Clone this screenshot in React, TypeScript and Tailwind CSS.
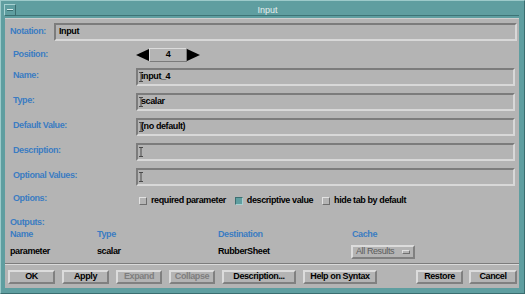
import React from "react";

const font = { fontFamily: '"Liberation Sans", Arial, sans-serif' };

const sunken =
  "border-2 border-t-[#7c7c7c] border-l-[#7c7c7c] border-b-[#d8d8d8] border-r-[#d8d8d8]";
const raised =
  "border-2 border-t-[#dcdcdc] border-l-[#dcdcdc] border-b-[#808080] border-r-[#808080]";

function Cursor() {
  return (
    <svg width="4" height="10" viewBox="0 0 4 10" className="shrink-0">
      <path d="M0 0.5H4M0 9.5H4M2 0.5V9.5" stroke="#4a4a4a" strokeWidth="1" fill="none" />
    </svg>
  );
}

function Field({
  label,
  value,
  cursor,
}: {
  label: string;
  value?: string;
  cursor?: boolean;
}) {
  return (
    <div className="flex items-start h-[18px]">
      <div className="w-[126px] pl-[3px] pt-[2px] leading-[11px] text-[#3b7cc2]">{label}</div>
      <div className={`flex-1 mr-[4px] h-[18px] flex items-center pl-[1px] ${sunken}`}>
        {cursor && <Cursor />}
        {value && <span className="text-black -translate-x-[2px]">{value}</span>}
      </div>
    </div>
  );
}

function Check({ label, checked }: { label: string; checked?: boolean }) {
  return (
    <div className="flex items-center gap-[4px]">
      <div
        className={`w-[8px] h-[8px] border ${
          checked
            ? "bg-[#5f9ea0] border-t-[#3d6f71] border-l-[#3d6f71] border-b-[#a8d0d0] border-r-[#a8d0d0]"
            : "bg-[#b4b4b4] border-t-[#e2e2e2] border-l-[#e2e2e2] border-b-[#6e6e6e] border-r-[#6e6e6e]"
        }`}
      />
      <span className="text-black">{label}</span>
    </div>
  );
}

function Btn({ label, w, disabled }: { label: string; w: string; disabled?: boolean }) {
  return (
    <div
      className={`${w} h-[14px] flex items-center justify-center ${raised} ${
        disabled ? "text-[#7e7e7e]" : "text-black"
      }`}
    >
      {label}
    </div>
  );
}

export default function App() {
  return (
    <div
      style={font}
      className="w-[525px] h-[294px] bg-[#5f9ea0] flex flex-col pt-[3px] pl-[4px] pr-[5px] pb-[5px] border border-t-[#9ccaca] border-l-[#9ccaca] border-b-[#3a6e70] border-r-[#3a6e70] text-[9px] font-bold tracking-[-0.4px] select-none"
    >
      <div className="h-[12px] flex items-center -ml-[1px] border-b border-[#3d7476]">
        <div className="w-[12px] h-[12px] flex items-center justify-center border border-t-[#a6d2d2] border-l-[#a6d2d2] border-b-[#3a6e70] border-r-[#3a6e70]">
          <div className="w-[6px] h-[2px] bg-[#d8ecec] border-b border-[#3a6e70]" />
        </div>
        <div className="flex-1 text-center font-normal text-[#e4eeee] tracking-normal leading-[12px]">
          Input
        </div>
      </div>
      <div className="flex-1 mt-[2px] bg-[#b4b4b4] flex flex-col border-t border-[#cfcfcf]">
        <div className="flex items-center h-[18px] mt-[4px] pl-[5px]">
          <div className="w-[44px] text-[#3b7cc2]">Notation:</div>
          <div className={`flex-1 mr-[2px] h-[18px] flex items-center pl-[3px] ${sunken}`}>
            <span className="text-black">Input</span>
          </div>
        </div>

        <div className="flex items-center h-[14px] mt-[7px] pl-[8px]">
          <div className="w-[123px] text-[#3b7cc2]">Position:</div>
          <svg width="13" height="12" viewBox="0 0 13 12">
            <path d="M0 6L13 0V12Z" fill="#000" />
          </svg>
          <div className="w-[38px] h-[14px] flex items-center justify-center text-black border border-t-[#dcdcdc] border-l-[#dcdcdc] border-b-[#7a7a7a] border-r-[#7a7a7a]">
            4
          </div>
          <svg width="13" height="12" viewBox="0 0 13 12">
            <path d="M13 6L0 0V12Z" fill="#000" />
          </svg>
        </div>

        <div className="flex flex-col gap-[7px] mt-[6px] pl-[5px]">
          <Field label="Name:" value="input_4" cursor />
          <Field label="Type:" value="scalar" cursor />
          <Field label="Default Value:" value="(no default)" cursor />
          <Field label="Description:" cursor />
          <Field label="Optional Values:" cursor />
        </div>

        <div className="flex items-center h-[11px] mt-[9px] pl-[8px]">
          <div className="w-[126px] text-[#3b7cc2] -mt-[3px]">Options:</div>
          <div className="flex items-center gap-[9px]">
            <Check label="required parameter" />
            <Check label="descriptive value" checked />
            <Check label="hide tab by default" />
          </div>
        </div>

        <div className="pl-[5px] mt-[11px] leading-[11px] text-[#3b7cc2]">Outputs:</div>
        <div className="pl-[5px] mt-[1px] leading-[11px] flex text-[#3b7cc2]">
          <div className="w-[87px]">Name</div>
          <div className="w-[121px]">Type</div>
          <div className="w-[134px]">Destination</div>
          <div>Cache</div>
        </div>
        <div className="pl-[5px] mt-[5px] h-[14px] flex items-center text-black">
          <div className="w-[87px]">parameter</div>
          <div className="w-[121px]">scalar</div>
          <div className="w-[133px]">RubberSheet</div>
          <div className={`w-[64px] h-[14px] flex items-center justify-between px-[3px] text-[#5c5c5c] font-normal ${raised}`}>
            <span>All Results</span>
            <div className="w-[8px] h-[4px] border border-t-[#e0e0e0] border-l-[#e0e0e0] border-b-[#707070] border-r-[#707070]" />
          </div>
        </div>

        <div className="mt-[4px] h-[2px] border-t border-b border-t-[#7c7c7c] border-b-[#dadada]" />

        <div className="flex items-center mt-[5px] pl-[3px] pr-[2px]">
          <div className="flex gap-[7px]">
            <Btn label="OK" w="w-[47px]" />
            <Btn label="Apply" w="w-[47px]" />
            <Btn label="Expand" w="w-[46px]" disabled />
            <Btn label="Collapse" w="w-[46px]" disabled />
            <Btn label="Description..." w="w-[74px]" />
            <Btn label="Help on Syntax" w="w-[74px]" />
          </div>
          <div className="flex-1" />
          <div className="flex gap-[6px]">
            <Btn label="Restore" w="w-[47px]" />
            <Btn label="Cancel" w="w-[48px]" />
          </div>
        </div>
      </div>
    </div>
  );
}
